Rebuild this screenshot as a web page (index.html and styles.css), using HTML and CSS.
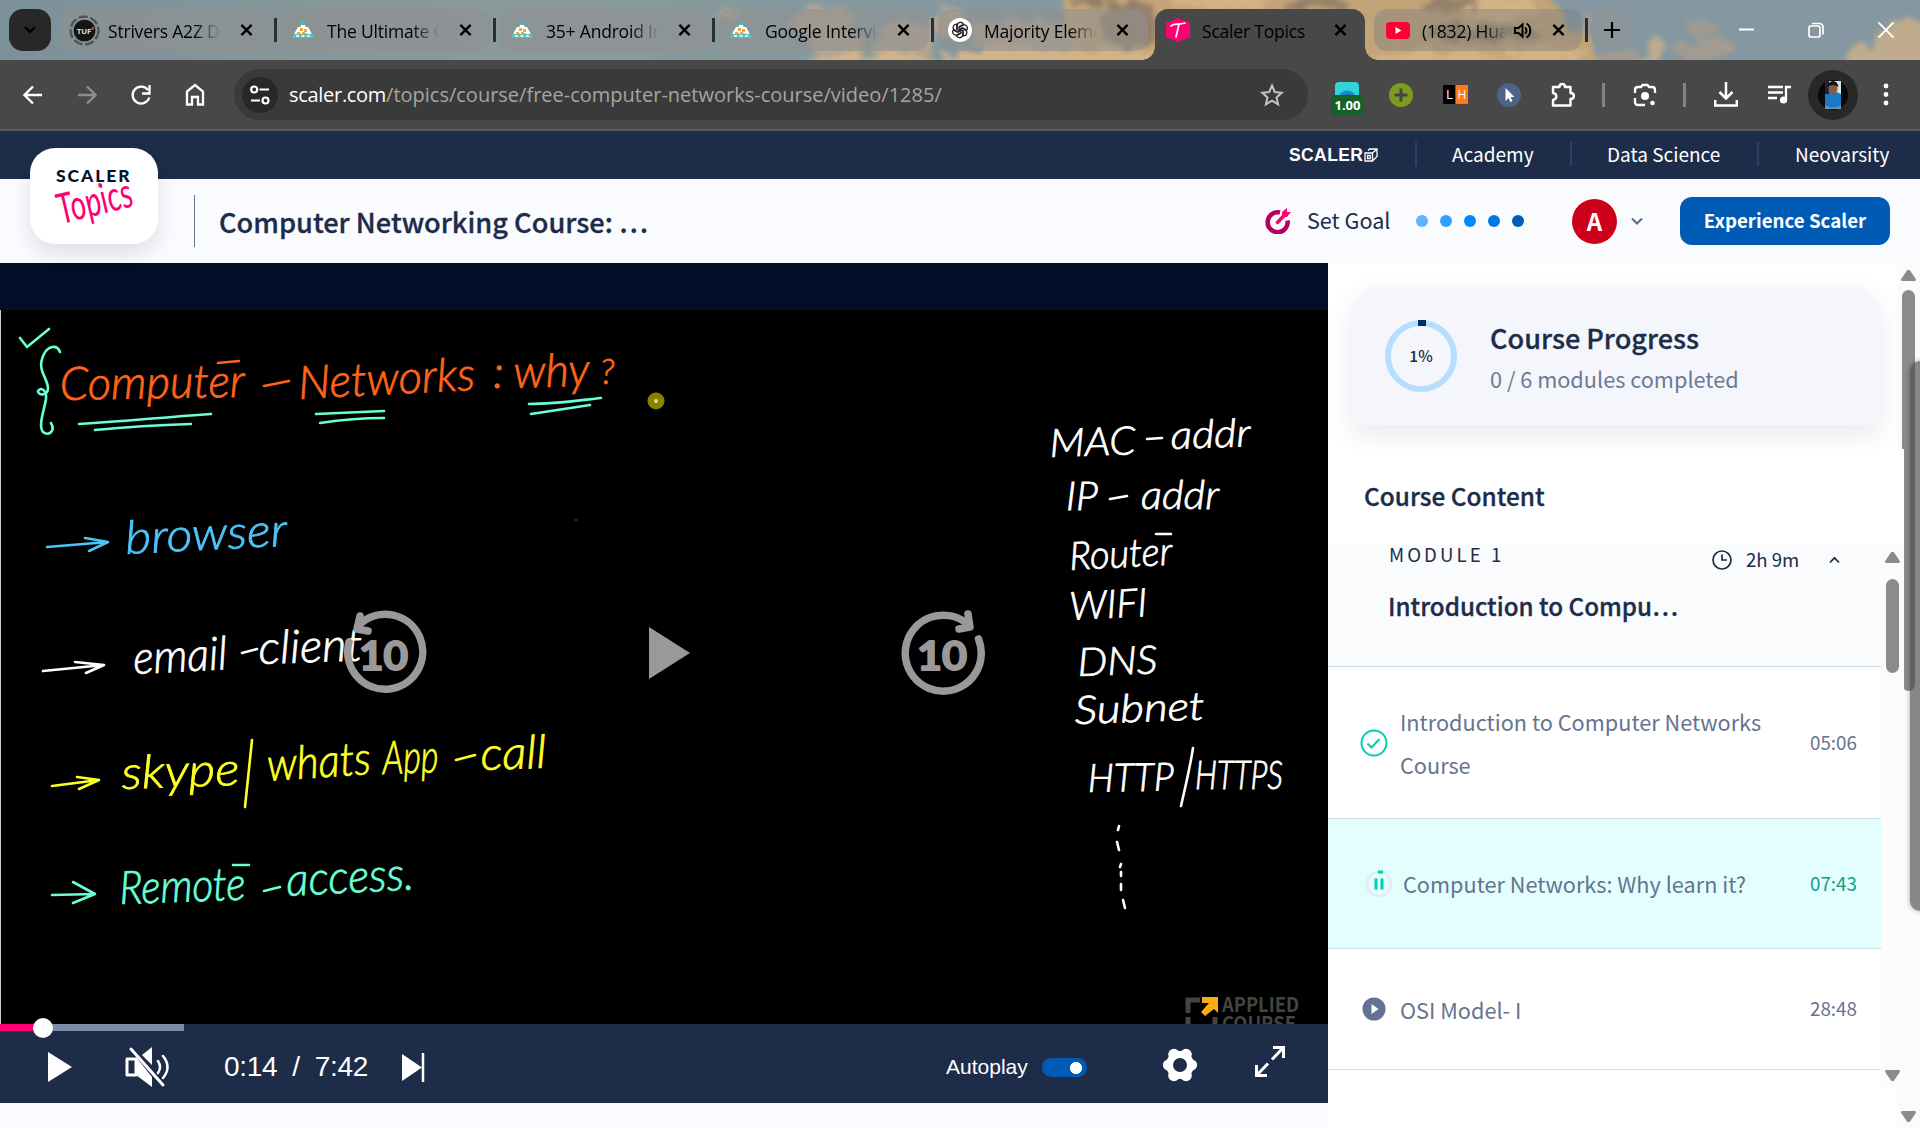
FILE: index.html
```html
<!DOCTYPE html>
<html lang="en">
<head>
<meta charset="utf-8">
<title>Scaler Topics</title>
<link rel="stylesheet" href="styles.css">
</head>
<body>
<svg width="0" height="0" class="defs">
  <defs>
    <symbol id="close" viewBox="0 0 14 14"><path d="M1.500 1.500l11 11M12.500 1.500l-11 11" fill="none" stroke="currentColor" stroke-width="2.600"/></symbol>
    <symbol id="tents" viewBox="0 0 24 20">
      <path d="M12 1l4 5h-8z" fill="#43bcc4"/><path d="M7 7h10l4 7H3z" fill="#fff"/><path d="M10 5h4l1 4h-6z" fill="#fff"/><path d="M9 8h3v3h-3zM13 9h3v3h-3zM6 12h3v3h-3zM11 12h3v3h-3z" fill="#f5a53b"/>
      <path d="M1 18l2-5 3 2 3-2 3 2 3-2 3 2 3-2 2 5z" fill="#4fc5cc"/><path d="M5 16h3M10.500 16h3M16 16h3" stroke="#fff" stroke-width="1.500"/>
    </symbol>
  </defs>
</svg>

<header class="tabs">
  <svg class="sky" viewBox="0 0 1920 60" preserveAspectRatio="none">
    <defs>
      <linearGradient id="skyg"><stop offset="0" stop-color="#7d919a"/><stop offset=".25" stop-color="#8b999b"/><stop offset=".5" stop-color="#8499a0"/><stop offset="1" stop-color="#8597a0"/></linearGradient>
      <filter id="puff" x="-5%" y="-60%" width="110%" height="220%"><feTurbulence type="fractalNoise" baseFrequency=".06" numOctaves="4" seed="4"/><feDisplacementMap in="SourceGraphic" scale="24" xChannelSelector="R" yChannelSelector="G"/><feGaussianBlur stdDeviation="2.600"/></filter>
    </defs>
    <rect width="1920" height="60" fill="url(#skyg)"/>
    <g filter="url(#puff)">
      <g fill="#b3a590"><ellipse cx="728" cy="14" rx="10" ry="7"/><ellipse cx="825" cy="22" rx="35" ry="14"/><ellipse cx="835" cy="46" rx="28" ry="12"/><ellipse cx="905" cy="40" rx="30" ry="20"/><ellipse cx="950" cy="22" rx="16" ry="14"/><ellipse cx="1030" cy="34" rx="60" ry="14"/></g>
      <g fill="#d2b48a"><ellipse cx="880" cy="64" rx="76" ry="11"/><ellipse cx="1010" cy="60" rx="70" ry="13"/></g>
      <path d="M1060-30H1538L1560 20 1590 42 1600 80H1070z" fill="#c2a478"/>
      <g fill="#d3b385"><ellipse cx="1110" cy="62" rx="50" ry="14"/><ellipse cx="1220" cy="2" rx="50" ry="9"/><ellipse cx="1500" cy="8" rx="38" ry="12"/><ellipse cx="1430" cy="62" rx="70" ry="12"/><ellipse cx="1545" cy="56" rx="40" ry="10"/></g>
      <g fill="#94816a"><ellipse cx="1130" cy="22" rx="30" ry="24"/><ellipse cx="1090" cy="0" rx="16" ry="8"/><ellipse cx="1320" cy="4" rx="30" ry="8"/><ellipse cx="1450" cy="2" rx="26" ry="8"/><ellipse cx="1480" cy="34" rx="60" ry="9"/></g>
      <g fill="#a19b91"><ellipse cx="1588" cy="30" rx="10" ry="14"/><ellipse cx="1620" cy="58" rx="26" ry="9"/><ellipse cx="1705" cy="48" rx="28" ry="13"/><ellipse cx="1702" cy="28" rx="18" ry="6"/></g>
      <g fill="#c0ab8d"><ellipse cx="1657" cy="46" rx="9" ry="10"/><ellipse cx="1650" cy="60" rx="12" ry="7"/><ellipse cx="1728" cy="48" rx="5" ry="5"/><ellipse cx="1865" cy="60" rx="24" ry="12"/><ellipse cx="1908" cy="46" rx="34" ry="24"/></g>
    </g>
  </svg>
  <span class="search"><svg width="14" height="10" viewBox="0 0 14 10"><path d="M2 2l5 5 5-5" fill="none" stroke="#000" stroke-width="2.400"/></svg></span>
  <div class="tab first"><svg class="fav wide" viewBox="0 0 30 30"><circle cx="15" cy="15" r="13.500" fill="none" stroke="#4d5254" stroke-width="2.200" stroke-dasharray="9 2.500"/><circle cx="15" cy="15" r="10.500" fill="#151515"/><text x="7.500" y="18" font-size="7.500" font-weight="700" fill="#ddd">TUF</text><circle cx="23" cy="13" r="1.400" fill="#c44"/></svg><span class="label">Strivers A2Z D</span><svg class="x"><use href="#close"/></svg></div>
  <i class="bar"></i>
  <div class="tab"><svg class="fav"><use href="#tents"/></svg><span class="label">The Ultimate G</span><svg class="x"><use href="#close"/></svg></div>
  <i class="bar"></i>
  <div class="tab"><svg class="fav"><use href="#tents"/></svg><span class="label">35+ Android In</span><svg class="x"><use href="#close"/></svg></div>
  <i class="bar"></i>
  <div class="tab"><svg class="fav"><use href="#tents"/></svg><span class="label">Google Intervie</span><svg class="x"><use href="#close"/></svg></div>
  <i class="bar"></i>
  <div class="tab"><svg class="fav" viewBox="0 0 24 24"><circle cx="12" cy="12" r="12" fill="#fff"/><g fill="none" stroke="#222" stroke-width="1.200"><path id="petal" d="M9.300 12V7.600c0-3.800 5-4.400 6.200-1.400L11.200 8.700v4"/><use href="#petal" transform="rotate(60 12 12)"/><use href="#petal" transform="rotate(120 12 12)"/><use href="#petal" transform="rotate(180 12 12)"/><use href="#petal" transform="rotate(240 12 12)"/><use href="#petal" transform="rotate(300 12 12)"/></g></svg><span class="label">Majority Eleme</span><svg class="x"><use href="#close"/></svg></div>
  <div class="tab active"><svg class="fav" viewBox="0 0 24 24"><path d="M12 0l12 5v14l-12 5L0 19V5z" fill="#ff0073"/><path d="M5 8c2-3 7-1 14-3M13 6c-1 5-2 9-3 13" fill="none" stroke="#fff" stroke-width="1.700" stroke-linecap="round"/></svg><span class="label full">Scaler Topics</span><svg class="x"><use href="#close"/></svg></div>
  <div class="tab sound"><svg class="fav" viewBox="0 0 24 24"><rect y="4" width="24" height="17" rx="4" fill="#f03"/><path d="M9.500 9v7l6-3.500z" fill="#fff"/></svg><span class="label short">(1832) Hua</span><svg class="vol" viewBox="0 0 18 16"><path d="M1 5.500h3.500L8.500 2v12l-4-3.500H1z" fill="none" stroke="#000" stroke-width="2"/><path d="M11 5c2 1.500 2 4.500 0 6M12.500 1c5 3 5 11 0 14" fill="none" stroke="#000" stroke-width="2"/></svg><svg class="x"><use href="#close"/></svg></div>
  <i class="bar last"></i>
  <span class="plus"><svg width="16" height="16"><path d="M8 0v16M0 8h16" stroke="#000" stroke-width="2.200"/></svg></span>
  <div class="window">
    <svg width="16" height="16"><path d="M0 7.500h15" stroke="#fff" stroke-width="2"/></svg>
    <svg width="17" height="17"><rect x="1" y="4" width="11" height="11" rx="2" fill="none" stroke="#fff" stroke-width="1.700"/><path d="M4 1.500h7.500a3.500 3.500 0 0 1 3.500 3.500v7.500" fill="none" stroke="#fff" stroke-width="1.700"/></svg>
    <svg width="16" height="16"><path d="M.5.500l15 15M15.500.500l-15 15" stroke="#fff" stroke-width="1.900"/></svg>
  </div>
</header>

<div class="toolbar">
  <div class="cells">
    <span><svg width="20" height="20"><path d="M19 10H2M10 1.500L1.500 10l8.500 8.500" fill="none" stroke="#fff" stroke-width="2.300"/></svg></span>
    <span><svg width="20" height="20"><path d="M1 10h17M10 1.500l8.500 8.500-8.500 8.500" fill="none" stroke="#8e8e8e" stroke-width="2.300"/></svg></span>
    <span><svg width="22" height="22"><path d="M18 6A8.500 8.500 0 1 0 19.300 13.500" fill="none" stroke="#fff" stroke-width="2.300"/><path d="M19.500 1v8.500H12" fill="none" stroke="#fff" stroke-width="2.300"/></svg></span>
    <span><svg width="20" height="23"><path d="M2 8.500L10 2l8 6.500V21.500h-5v-7.500H7v7.500H2z" fill="none" stroke="#fff" stroke-width="2.300"/></svg></span>
  </div>
  <div class="address">
    <span class="site"><svg width="20" height="20"><g fill="none" stroke="#fff" stroke-width="2.200"><circle cx="4.200" cy="4.500" r="3"/><path d="M9.500 4.500H19M1 15.500h9"/><circle cx="15.500" cy="15.500" r="3"/></g></svg></span>
    <p class="url"><b>scaler.com</b>/topics/course/free-computer-networks-course/video/1285/</p>
    <svg width="24" height="24" viewBox="0 0 24 24"><path d="M12 2.500l2.800 6.600 7 .6-5.300 4.700 1.600 7-6.100-3.700-6.100 3.700 1.600-7L2.200 9.700l7-.6z" fill="none" stroke="#c5c5c5" stroke-width="2"/></svg>
  </div>
  <div class="cells ext">
    <span class="speed"><i></i><em>1.00</em></span>
    <span><svg width="24" height="24"><circle cx="12" cy="12" r="12" fill="#7a9c1f"/><path d="M12 5.500v13M5.500 12h13" stroke="#444" stroke-width="3"/></svg></span>
    <span><svg width="25" height="19"><path d="M0 0h12.500v19H0z" fill="#000"/><path d="M12.500 0H25v19H12.500z" fill="#ff7a14"/><text x="3" y="14" font-size="13" fill="#fff">L</text><text x="14.500" y="14" font-size="12" fill="#fff">H</text></svg></span>
    <span><svg width="24" height="24"><circle cx="12" cy="12" r="12" fill="#4b6488"/><path d="M8.500 5v13l3-3 2 4 2-1-2-4h4z" fill="#fff"/></svg></span>
    <span><svg width="25" height="26" viewBox="0 0 25 26"><path d="M2 5h6.500c0-4 5.500-4 5.500 0h5.500v6c4.500 0 4.500 6 0 6v6.500H2v-5.500c4.500-1 4.500-6.500 0-7z" fill="none" stroke="#fff" stroke-width="2.400" stroke-linejoin="round"/></svg></span>
  </div>
  <i class="div d1"></i>
  <span class="lens"><svg width="24" height="24" viewBox="0 0 24 24"><path d="M2 10V7q0-3 3-3h3l1.500-2h5L16 4h3q3 0 3 3v3M2 15v4q0 3 3 3h7" fill="none" stroke="#fff" stroke-width="2.300"/><circle cx="12" cy="13" r="4" fill="#fff"/><circle cx="19.500" cy="20" r="2.300" fill="#fff"/></svg></span>
  <i class="div d2"></i>
  <div class="cells end">
    <span><svg width="24" height="25"><path d="M12 0v16M5.500 10l6.500 6.500 6.500-6.500M1.200 18v5.500h21.600V18" fill="none" stroke="#fff" stroke-width="2.500"/></svg></span>
    <span><svg width="24" height="20"><path d="M0 2h15M0 7.500h15M0 13h9M18 15V2h5" fill="none" stroke="#fff" stroke-width="2.300"/><circle cx="15.500" cy="15" r="3.600" fill="#fff"/></svg></span>
    <span class="me"><svg width="50" height="50"><circle cx="25" cy="25" r="25" fill="#282828"/><circle cx="25" cy="25" r="15" fill="#090909"/><path d="M17 11h16v28H17z" fill="#d8e4e4"/><path d="M17 24q8-5 16 0v15H17z" fill="#1b78c4"/><path d="M17 11h4v13h-4z" fill="#223"/><ellipse cx="25" cy="18.500" rx="4.500" ry="6" fill="#8a5c42"/><path d="M19.500 17q1-6 5.500-6t5.500 6q-5.500-4-11 0" fill="#111"/><path d="M17 35q8 5 16 0v4H17z" fill="#6f95a8"/></svg></span>
    <span><svg width="6" height="24"><circle cx="3" cy="3" r="2.400" fill="#fff"/><circle cx="3" cy="11.500" r="2.400" fill="#fff"/><circle cx="3" cy="20" r="2.400" fill="#fff"/></svg></span>
  </div>
</div>

<nav class="topnav">
  <span class="brand">SCALER<svg width="14" height="14" viewBox="0 0 14 14"><path d="M4 2.500L5.500 1H13v7.500L8.500 13M1 5h7.500v8H1zM8.500 5L13 1M3.500 7.500h2.700v3H3.500z" fill="none" stroke="#fff" stroke-width="1.300"/></svg></span>
  <a class="n1">Academy</a><a class="n2">Data Science</a><a class="n3">Neovarsity</a>
</nav>

<div class="head">
  <div class="logo"><b>SCALER</b><svg width="86" height="54" viewBox="0 0 86 54"><text class="script" x="0" y="0" transform="translate(8 43) rotate(-14) skewX(4)" textLength="76" lengthAdjust="spacingAndGlyphs">Topics</text></svg></div>
  <h1>Computer Networking Course: …</h1>
  <svg class="goal" width="26" height="26" viewBox="0 0 26 26"><path d="M15 4.500a10 10 0 1 0 7.500 8" fill="none" stroke="#b5005e" stroke-width="4.500"/><path d="M12.500 14.500l8-8.500" stroke="#ff0073" stroke-width="3.500" stroke-linecap="round"/><path d="M17 8V4l5-4v4h4l-4 5h-4z" fill="#ff0073"/></svg>
  <span class="set">Set Goal</span>
  <div class="dots"><i></i><i></i><i></i><i></i><i></i></div>
  <span class="avatar">A</span>
  <svg class="chev" width="12" height="9"><path d="M1 1.500l5 5 5-5" fill="none" stroke="#57698a" stroke-width="2"/></svg>
  <a class="cta">Experience Scaler</a>
</div>

<main>
  <section class="player">
    <div class="band"></div>
    <svg class="board" viewBox="0 310 1328 714" width="1328" height="714">
      <rect y="310" width="1328" height="714" fill="#000"/>
      <path d="M.5 310v714" stroke="#ccc"/>
      <g class="mint ln">
        <path d="M20 338l7 9 22-18"/><path d="M60 352c-3-8-12-6-16 2-8 16 3 22 4 34 0 8-10 8-10 3 2-4 9-2 8 8-2 12-8 27-3 33 5 4 13 0 8-9"/>
        <path d="M79 424c50-3 75-6 132-10M95 430c30-3 60-5 96-6M316 414l68-3M320 423c20-3 40-5 64-5M529 404c25 0 45-3 72-6M531 414l59-9"/>
        <path d="M52 895l43-1M73 882l22 12-22 9"/>
      </g>
      <g class="orange">
        <text transform="translate(60 400) rotate(-1)" textLength="185" lengthAdjust="spacingAndGlyphs">Computer</text>
        <path class="ln" d="M218 363l21-2M264 386l25-5"/>
        <text transform="translate(299 399) rotate(-3)" textLength="177" lengthAdjust="spacingAndGlyphs">Networks</text>
        <text x="493" y="388">:</text>
        <text transform="translate(514 388) rotate(-2)" textLength="76" lengthAdjust="spacingAndGlyphs">why</text>
        <text x="600" y="384" font-size="36">?</text>
      </g>
      <g class="blue"><path class="ln" d="M47 547l61-5M85 538l23 4-19 9"/><text transform="translate(126 554) rotate(-3)" textLength="162" lengthAdjust="spacingAndGlyphs">browser</text></g>
      <g class="white">
        <path class="ln" d="M43 671l61-6M75 662l29 3-18 8M242 653l15-4"/>
        <text transform="translate(134 674) rotate(-3)" textLength="94" lengthAdjust="spacingAndGlyphs">email</text>
        <text transform="translate(259 664) rotate(-2)" textLength="104" lengthAdjust="spacingAndGlyphs">client</text>
      </g>
      <g class="yellow">
        <path class="ln" d="M52 786l47-6M77 777l22 3-20 9M252 740l-7 67M456 760l19-5"/>
        <text transform="translate(122 789) rotate(-2)" textLength="118" lengthAdjust="spacingAndGlyphs">skype</text>
        <text transform="translate(268 781) rotate(-4)" textLength="104" lengthAdjust="spacingAndGlyphs">whats</text>
        <text transform="translate(383 774) rotate(-2)" textLength="56" lengthAdjust="spacingAndGlyphs">App</text>
        <text transform="translate(481 770) rotate(-2)" textLength="66" lengthAdjust="spacingAndGlyphs">call</text>
      </g>
      <g class="mint">
        <text transform="translate(120 904) rotate(-2)" textLength="126" lengthAdjust="spacingAndGlyphs">Remote</text><path class="ln" d="M233 865l16 0M264 891l16-4"/>
        <text transform="translate(287 896) rotate(-3)" textLength="128" lengthAdjust="spacingAndGlyphs">access.</text>
      </g>
      <g class="white notes">
        <text transform="translate(1050 457) rotate(-2)" textLength="86" lengthAdjust="spacingAndGlyphs">MAC</text>
        <text transform="translate(1171 449) rotate(-2)" textLength="80" lengthAdjust="spacingAndGlyphs">addr</text>
        <text transform="translate(1066 510)" textLength="32" lengthAdjust="spacingAndGlyphs">IP</text>
        <text transform="translate(1141 509)" textLength="78" lengthAdjust="spacingAndGlyphs">addr</text>
        <text transform="translate(1070 570) rotate(-3)" textLength="103" lengthAdjust="spacingAndGlyphs">Router</text>
        <text transform="translate(1070 620) rotate(-3)" textLength="78" lengthAdjust="spacingAndGlyphs">WIFI</text>
        <text transform="translate(1078 676) rotate(-2)" textLength="80" lengthAdjust="spacingAndGlyphs">DNS</text>
        <text transform="translate(1075 724) rotate(-2)" textLength="130" lengthAdjust="spacingAndGlyphs">Subnet</text>
        <text transform="translate(1088 792) rotate(-1)" textLength="86" lengthAdjust="spacingAndGlyphs">HTTP</text>
        <text transform="translate(1195 789)" textLength="88" lengthAdjust="spacingAndGlyphs">HTTPS</text>
        <path class="ln" d="M1147 439l15-1M1110 499l17-3M1156 534h15M1193 748c-3 20-8 40-12 58M1119 826l-1 4M1117 842l2 8M1121 864l-1 3M1121 872v4M1121 884v6M1123 900l2 8"/>
      </g>
      <circle cx="656" cy="401" r="8.500" fill="#828400"/><circle cx="656" cy="401" r="2" fill="#e4e68c"/>
      <circle cx="576" cy="520" r="1" fill="#733"/>
      <g class="wm"><path d="M1188 1013v-13h12M1188 1024v-7M1215 1017v7" fill="none" stroke="#444" stroke-width="5"/><path d="M1202 997h16v16l-4-4-9 7-4-4 8-9h-7z" fill="#fdab14"/><text x="1222" y="1012" textLength="77" lengthAdjust="spacingAndGlyphs">APPLIED</text><text x="1222" y="1031" textLength="74" lengthAdjust="spacingAndGlyphs">COURSE</text></g>
      <g class="over">
        <path d="M978.500 639A38 38 0 1 1 965 622M968 614l2 13-11 2M360 624A37.500 37.500 0 1 1 349 642M360 616l-3 13 11 2" fill="none" stroke="#999" stroke-width="7.500" stroke-linecap="round" stroke-linejoin="round"/>
        <text x="359" y="670" textLength="49" lengthAdjust="spacingAndGlyphs">10</text><text x="917" y="670" textLength="50" lengthAdjust="spacingAndGlyphs">10</text>
        <path d="M649 627v52l41-26z" fill="#999"/>
      </g>
    </svg>
    <div class="controls">
      <div class="track"><i class="done"></i><i class="knob"></i><i class="buffer"></i></div>
      <div class="btns">
        <svg class="play" width="24" height="30"><path d="M0 0v30l24-15z" fill="#fff"/></svg>
        <svg class="mute" width="46" height="42" viewBox="0 0 46 42"><path d="M12 13H3v16h9z" fill="none" stroke="#fff" stroke-width="3" stroke-linejoin="round"/><path d="M28 1v18L18 9zM12 11l16 20v10L12 29z" fill="#fff"/><path d="M7 3l32 36" stroke="#fff" stroke-width="3" stroke-linecap="round"/><path d="M34 15q4 6 0 12M39 10q9 11 0 22" fill="none" stroke="#fff" stroke-width="2.500" stroke-linecap="round"/></svg>
        <span class="time">0:14&nbsp; /&nbsp; 7:42</span>
        <svg width="23" height="29"><path d="M0 1v27l20-13.500z" fill="#fff"/><path d="M21 0v29" stroke="#fff" stroke-width="2.500"/></svg>
        <span class="auto">Autoplay</span><i class="toggle"></i>
        <svg class="gear" width="36" height="34" viewBox="-18 -17 36 34"><g fill="#fff"><circle r="14"/><circle cx="-11.500" r="5.600"/><circle cx="11.500" r="5.600"/><circle cx="-6" cy="-10.500" r="5.800"/><circle cx="6" cy="-10.500" r="5.800"/><circle cx="-6" cy="10.500" r="5.800"/><circle cx="6" cy="10.500" r="5.800"/></g><circle r="7" fill="#1c2c49"/></svg>
        <svg width="30" height="31"><path d="M18 1.500h10.500V12M28 2L17 13.500M1.500 19v10.500H12M2 29l11-11.500" fill="none" stroke="#fff" stroke-width="3"/></svg>
      </div>
    </div>
  </section>

  <aside>
    <div class="top">
      <div class="card">
        <svg width="72" height="72"><circle cx="36" cy="36" r="33" fill="none" stroke="#b8deff" stroke-width="6"/><path d="M33 0h8v6h-8z" fill="#012a66"/><text x="36" y="41.500" text-anchor="middle">1%</text></svg>
        <div><h2>Course Progress</h2><p>0 / 6 modules completed</p></div>
      </div>
    </div>
    <h3>Course Content</h3>
    <div class="scroll">
      <div class="list">
        <div class="module">
          <div class="row1"><span class="mod">MODULE 1</span><svg width="20" height="20"><circle cx="10" cy="10" r="9" fill="none" stroke="#1c2c49" stroke-width="1.700"/><path d="M10 4.500V10h5" fill="none" stroke="#1c2c49" stroke-width="1.700"/></svg><span class="dur">2h 9m</span><svg width="11" height="8"><path d="M1 6.500l4.500-4.700L10 6.500" fill="none" stroke="#1c2c49" stroke-width="1.800"/></svg></div>
          <h4>Introduction to Compu…</h4>
        </div>
        <div class="item a"><svg width="28" height="28"><circle cx="14" cy="14" r="12.500" fill="none" stroke="#00ceb3" stroke-width="2"/><path d="M7.500 14.500l4 4 8-8.500" fill="none" stroke="#00ceb3" stroke-width="2"/></svg><p>Introduction to Computer Networks Course</p><time>05:06</time></div>
        <div class="item b"><svg width="28" height="28"><circle cx="14" cy="14" r="12" fill="none" stroke="#e4eafa" stroke-width="2.800"/><path d="M13 2h5" stroke="#00ceb3" stroke-width="3"/><path d="M11 8.500v11M17 8.500v11" stroke="#00ceb3" stroke-width="3"/></svg><p>Computer Networks: Why learn it?</p><time>07:43</time></div>
        <div class="item c"><svg width="24" height="24"><circle cx="12" cy="12" r="11.500" fill="#637293"/><path d="M9.500 7v10l7-5z" fill="#fff"/></svg><p>OSI Model- I</p><time>28:48</time></div>
      </div>
      <div class="gutter"><i class="tri up"></i><i class="thumb"></i><i class="tri down"></i></div>
    </div>
    <div class="gutter outer"><i class="tri up"></i><i class="thumb tall"></i><i class="tri down"></i></div>
    <i class="edge"></i>
  </aside>
</main>
</body>
</html>
```
FILE: styles.css
```css
* { box-sizing: border-box; margin: 0; padding: 0; }
body { width: 1920px; height: 1128px; overflow: hidden; background: #fafbfe; color: #1c2c49; font-family: "Noto Sans CJK JP", "Noto Sans", sans-serif; }
.defs { position: absolute; }
svg { flex: none; display: block; }

.tabs, .toolbar { font-family: "Open Sans", "Noto Sans", sans-serif; }
.tabs { position: relative; height: 60px; display: flex; align-items: center; padding-left: 9px; overflow: hidden; }
.tabs > * { position: relative; flex: none; }
.tabs > .sky { position: absolute; left: 0; top: 0; width: 1920px; height: 60px; }
.search { width: 42px; height: 42px; border-radius: 14px; background: #282828; display: grid; place-items: center; margin-right: 11px; }
.tab { width: 210px; height: 42px; border-radius: 13px; background: #9090908c; display: flex; align-items: center; padding-left: 10px; color: #000; margin-left: 3px; }
.tab.first { margin-left: 0; }
.tab .fav { width: 24px; height: 24px; margin-right: 12px; }
.tab .fav.wide { width: 31px; height: 31px; margin: 0 8px 0 -3px; }
.label { width: 113px; overflow: hidden; white-space: nowrap; font-size: 17.5px; line-height: 26px; font-stretch: 88%; letter-spacing: -.2px; padding-top: 2px; -webkit-mask-image: linear-gradient(90deg, #000 75%, transparent); mask-image: linear-gradient(90deg, #000 75%, transparent); }
.label.full { -webkit-mask-image: none; mask-image: none; }
.label.short { width: 84px; }
.tab .x { width: 13px; height: 14px; margin-left: 19px; }
.bar { width: 3px; height: 24px; background: #2c2f31; margin-left: 2px; margin-right: 1px; }
.bar.last { margin-left: 3px; }
.tab.active { height: 51px; align-self: flex-end; border-radius: 13px 13px 0 0; background: #484848; padding-bottom: 9px; margin-left: 7px; padding-left: 11px; }
.tab.active::before, .tab.active::after { content: ""; position: absolute; bottom: 0; width: 13px; height: 13px; background: radial-gradient(circle at 0 0, transparent 12.5px, #484848 13px); left: -13px; }
.tab.active::after { left: auto; right: -13px; transform: scaleX(-1); }
.tab.sound { background: #8080806e; margin-left: 9px; width: 208px; padding-left: 12px; }
.vol { width: 18px; height: 17px; margin-left: 8px; }
.tab.sound .x { margin-left: 20px; }
.plus { width: 44px; height: 44px; border-radius: 50%; background: #8b969a; display: grid; place-items: center; margin-left: 1px; }
.window { display: flex; gap: 53px; margin-left: 105px; }

.toolbar { height: 71px; background: #484848; border-bottom: 2px solid #595959; display: flex; align-items: center; padding: 1px 0 1px 6px; }
.cells { display: flex; }
.cells span { width: 54px; height: 52px; display: grid; place-items: center; }
.address { width: 1074px; height: 51px; border-radius: 26px; background: #3a3a3a; margin: 0 12px; display: flex; align-items: center; padding-left: 8px; }
.site { width: 36px; height: 36px; border-radius: 50%; background: #282828; display: grid; place-items: center; }
.url { flex: none; width: 982px; padding-left: 11px; font-size: 20px; font-stretch: 96%; letter-spacing: 0; color: #a5a5a5; white-space: nowrap; }
.url b { color: #fff; font-weight: 400; letter-spacing: -.3px; }
.cells .speed { position: relative; }
.speed i { width: 24px; height: 24px; border-radius: 4px; background: radial-gradient(circle at 12px 18px, #0d3e66 5px, #1a8ad0 6px 9px, #30d4d8 10px); margin-bottom: 1px; }
.speed em { position: absolute; left: 11px; top: 26px; width: 33px; height: 21px; border-radius: 5px; background: #156129; color: #fff; font: 700 13px/21px "Open Sans", sans-serif; text-align: center; }
.div { width: 3px; height: 24px; background: #7b8488; }
.d1 { margin-left: 12px; }
.lens { margin: 0 26px 0 28px; }
.end { margin-left: 13px; }
.end .me { width: 52px; }

.topnav { height: 48px; background: #1c2c49; display: flex; justify-content: flex-end; align-items: center; padding: 0 30px 2px 0; color: #fff; font-size: 19px; line-height: 24px; }
.topnav a { border-left: 2px solid #2f4163; white-space: nowrap; }
.brand { display: flex; align-items: center; gap: 1px; font: 700 17.5px/26px "Liberation Sans", sans-serif; letter-spacing: .4px; width: 126px; padding-top: 2px; }
.n1 { width: 155px; padding-left: 35px; }
.n2 { width: 187px; padding-left: 35px; }
.n3 { width: 133px; padding-left: 36px; }

.head { height: 84px; display: flex; align-items: center; padding-left: 30px; background: #fafbfe; }
.logo { position: relative; z-index: 1; width: 128px; height: 96px; margin-top: -50px; border-radius: 25px; background: #fff; box-shadow: 0 10px 22px #0000001c; padding: 19px 0 0 24px; }
.logo b { display: block; padding-left: 2px; font: 900 17.5px/18px Lato, sans-serif; letter-spacing: 1.9px; color: #04122e; }
.logo svg { margin-top: -4px; overflow: visible; }
.script { font: italic 400 42px Lato, sans-serif; fill: #ff0073; }
h1 { margin-left: 36px; border-left: 1px solid #65728d; padding-left: 24px; height: 52px; line-height: 52px; width: 1071px; font-size: 27.2px; font-weight: 500; -webkit-text-stroke: .3px #1c2c49; white-space: nowrap; }
.set { margin-left: 16px; width: 114px; font-size: 21.6px; line-height: 30px; margin-top: -2px; white-space: nowrap; }
.dots { display: flex; gap: 12px; margin-right: 48px; margin-left: -5px; }
.dots i { width: 12px; height: 12px; border-radius: 50%; background: #60b3ff; }
.dots i:nth-child(2) { background: #309fff; }
.dots i:nth-child(3) { background: #08f; }
.dots i:nth-child(4) { background: #0076e2; }
.dots i:nth-child(5) { background: #005eb9; }
.avatar { width: 45px; height: 45px; border-radius: 50%; background: #cd0019; color: #fff; font-size: 24px; font-weight: 700; line-height: 43px; text-align: center; }
.chev { margin-left: 14px; }
.cta { margin-left: 37px; width: 210px; height: 48px; border-radius: 12px; background: #005bb5; color: #fff; font-size: 18.7px; font-weight: 700; line-height: 46px; text-align: center; white-space: nowrap; }

main { display: flex; height: 865px; }
.player { width: 1328px; }
.band { height: 47px; background: #010f28; }
.board { font-family: Lato, sans-serif; font-style: italic; font-weight: 300; font-size: 46px; }
.ln { fill: none; stroke-width: 2.6; stroke-linecap: round; stroke-linejoin: round; }
.orange { fill: #ff6418; stroke: #ff6418; }
.mint { fill: #68ffd6; stroke: #68ffd6; }
.blue { fill: #4cc4fa; stroke: #4cc4fa; }
.white { fill: #fff; stroke: #fff; }
.yellow { fill: #ffff28; stroke: #ffff28; }
.board .ln { fill: none; }
.board text { stroke-width: .8; }
.notes { font-size: 39px; }
.wm { fill: #444; font: 700 20px "Noto Sans CJK JP", sans-serif; }
.over text { fill: #999; stroke: #999; stroke-width: 2; stroke-linejoin: round; font: 700 41px Lato, sans-serif; }
.controls { height: 79px; background: #1c2c49; }
.track { height: 7px; display: flex; align-items: center; }
.done { width: 34px; height: 7px; background: #ff0073; }
.knob { width: 20px; height: 20px; border-radius: 50%; background: #fff; margin: 0 -1px; z-index: 1; }
.buffer { width: 132px; height: 7px; background: #7b8ca8; }
.btns { height: 72px; display: flex; align-items: center; padding-left: 48px; color: #fff; font-family: "Liberation Sans", Arial, sans-serif; }
.play { margin-top: -1px; }
.mute { margin-left: 52px; }
.time { width: 178px; margin-left: 54px; font-size: 28px; letter-spacing: -.3px; white-space: nowrap; }
.auto { width: 96px; margin-left: 521px; font-size: 21px; letter-spacing: 0; }
.toggle { width: 45px; height: 19px; border-radius: 10px; background: radial-gradient(circle at 34px 10px, #fff 5.7px, #005bb5 6.3px); }
.gear { margin: -5px 57px 0 75px; }
.gear + svg { margin-top: -11px; }

aside { position: relative; width: 592px; background: #fff; }
.top { height: 186px; overflow: hidden; padding: 24px 0 0 24px; }
.card { width: 528px; height: 138px; background: #f4f6fb; border-radius: 25px 25px 3px 3px; box-shadow: 0 10px 28px #00000016; display: flex; align-items: center; padding-left: 33px; gap: 33px; }
.card text { font-size: 15.5px; font-weight: 500; fill: #1c2c49; }
h2, h3, h4 { -webkit-text-stroke: .3px #1c2c49; }
h2 { font-size: 27.1px; line-height: 38px; font-weight: 500; white-space: nowrap; margin-top: 1px; }
.card p { font-size: 21.7px; line-height: 32px; color: #6c7a97; margin-top: 6px; white-space: nowrap; }
h3 { position: relative; z-index: 3; width: 576px; height: 96px; padding-left: 36px; font-size: 24.4px; line-height: 94px; font-weight: 500; background: #fff; }
.scroll { position: relative; z-index: 3; width: 576px; height: 542px; display: flex; }
.list { width: 553px; color: #66738f; background: #fff; }
.module { height: 122px; background: #fafbfd; border-bottom: 1px solid #d3dde6; color: #1c2c49; }
.row1 { height: 30px; display: flex; align-items: center; padding-left: 61px; font-size: 18.6px; }
.mod { width: 323px; margin-top: -12px; line-height: 24px; letter-spacing: 3.1px; }
.dur { width: 97px; padding-left: 14px; margin-top: -2px; line-height: 24px; white-space: nowrap; }
h4 { padding-left: 60px; margin-top: 11px; font-size: 24.2px; line-height: 40px; font-weight: 500; white-space: nowrap; }
.item { display: flex; align-items: center; padding-left: 32px; border-bottom: 1px solid #d3dde6; }
.item p { flex: none; width: 422px; padding: 0 30px 0 12px; font-size: 21.7px; line-height: 43px; }
.item time { font-size: 18.8px; line-height: 30px; margin-top: -2px; }
.item.a { height: 152px; }
.item.a svg { margin-top: 1px; }
.item.b { height: 130px; padding-left: 37px; background: #e3fffd; }
.item.b p { width: 417px; padding: 0 0 0 10px; white-space: nowrap; }
.item.b time { color: #139b8e; }
.item.c { height: 121px; padding-left: 34px; }
.item.c p { width: 424px; padding-left: 14px; }
.gutter { position: relative; width: 23px; background: #fbfbfb; }
.gutter i { position: absolute; left: 5px; }
.thumb { width: 13px; border-radius: 7px; background: #8b8b8b; top: 34px; height: 94px; }
.tri { width: 15px; height: 11px; background: #8b8b8b; top: 7px; margin-left: -1px; clip-path: polygon(42% 0, 58% 0, 100% 85%, 96% 100%, 4% 100%, 0 85%); }
.tri.down { top: auto; bottom: 6px; transform: scaleY(-1); }
.gutter.outer { position: absolute; right: 0; top: 0; height: 865px; z-index: 2; }
.thumb.tall { top: 27px; height: 401px; }
.edge { position: absolute; z-index: 4; right: -3px; top: 98px; width: 13px; height: 550px; border-radius: 10px 0 0 10px; background: #4c4c4caa; box-shadow: 0 0 5px #0005; }
```
